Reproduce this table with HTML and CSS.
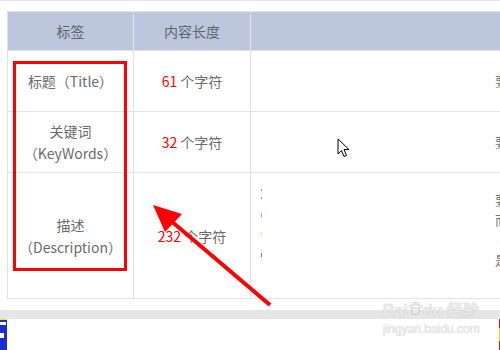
FILE: index.html
```html
<!DOCTYPE html>
<html lang="zh-CN">
<head>
<meta charset="utf-8">
<link rel="stylesheet" href="styles.css">
</head>
<body>
<div class="page">
  <div class="topline"></div>
  <div class="wrap">
    <div class="grid">
      <div class="cell head">标签</div>
      <div class="cell head">内容长度</div>
      <div class="cell head"></div>

      <div class="cell">标题（Title）</div>
      <div class="cell"><span class="num">61</span>&nbsp;个字符</div>
      <div class="cell desc"><span class="frag">要</span></div>

      <div class="cell">关键词<br>（KeyWords）</div>
      <div class="cell"><span class="num">32</span>&nbsp;个字符</div>
      <div class="cell desc"><span class="frag">要</span></div>

      <div class="cell">描述<br>（Description）</div>
      <div class="cell"><span class="num">232</span>&nbsp;个字符</div>
      <div class="cell desc long">
        <div class="dots">
          <span class="d d1"></span><span class="d d2"></span><span class="d d3"></span><span class="d d4"></span><span class="d d5"></span>
        </div>
        <div class="lines">
          <span class="frag">要</span>
          <span class="frag">而</span>
          <span class="frag">·</span>
          <span class="frag">是</span>
        </div>
      </div>
    </div>
  </div>
  <div class="band"></div>
  <div class="bottom">
    <div class="blueicon"><span class="n1"></span><span class="n2"></span></div>
    <div class="rightmark"></div>
  </div>

  <div class="redbox"></div>
  <svg class="arrow" width="500" height="350" viewBox="0 0 500 350">
    <line x1="270" y1="305" x2="170" y2="220" stroke="#ff0000" stroke-width="4"/>
    <polygon points="153,205 182,214 165,232" fill="#ff0000"/>
  </svg>
  <svg class="cursor" width="14" height="21" viewBox="0 0 14 21">
    <path d="M1 1 L1 16 L4.5 12.5 L7 18.5 L9.5 17.5 L7 11.5 L12 11.5 Z" fill="#fff" stroke="#000" stroke-width="1" stroke-linejoin="miter"/>
  </svg>
  <div class="watermark">
    <div class="wm1">Bai<svg class="paw" width="13" height="15" viewBox="0 0 14 16"><ellipse cx="7" cy="11" rx="4.5" ry="3.5" fill="none" stroke="#c8c8c8" stroke-width="1.2"/><circle cx="2.5" cy="6" r="1.6" fill="none" stroke="#c8c8c8"/><circle cx="5.5" cy="3" r="1.6" fill="none" stroke="#c8c8c8"/><circle cx="9" cy="3" r="1.6" fill="none" stroke="#c8c8c8"/><circle cx="12" cy="6" r="1.6" fill="none" stroke="#c8c8c8"/></svg>du 经验</div>
    <div class="wm2">jingyan.baidu.com</div>
  </div>
</div>
</body>
</html>
```
FILE: styles.css
```css
html, body {
  margin: 0;
  padding: 0;
  background: #fff;
}
.page {
  position: relative;
  width: 500px;
  height: 350px;
  overflow: hidden;
  font-family: "Noto Sans CJK SC", "Open Sans", sans-serif;
  font-size: 14px;
  color: #6b6b6b;
}
.topline {
  height: 1px;
  background: #e4e4e4;
}
.wrap {
  padding: 10px 0 0 7px;
  width: 700px;
}
.grid {
  display: grid;
  grid-template-columns: 125px 116px 1fr;
  grid-template-rows: 38px 60px 60px 125px;
  gap: 1px;
  padding: 1px;
  background: #e2e2e2;
}
.cell {
  background: #fff;
  display: flex;
  align-items: center;
  justify-content: center;
  text-align: center;
  line-height: 22px;
}
.head {
  background: #bcc7dd;
  color: #5f6570;
}
.num {
  color: #ff0000;
}
.desc {
  justify-content: flex-start;
  padding-left: 244px;
}
.frag {
  color: #777;
  font-size: 13px;
}
.desc.long {
  padding-left: 0;
  position: relative;
}
.dots {
  position: absolute;
  left: 10px;
  top: 14px;
  width: 3px;
  height: 70px;
}
.d {
  position: absolute;
  left: 0;
  width: 1px;
  height: 2px;
}
.d1 { top: 2px; background: #b08a60; }
.d2 { top: 10px; background: #b38c5e; }
.d3 { top: 26px; background: #e0a060; height: 4px; }
.d4 { top: 46px; background: #f5d080; }
.d5 { top: 66px; background: #8a7a60; height: 4px; }
.lines {
  display: flex;
  flex-direction: column;
  padding-left: 244px;
  padding-bottom: 12px;
  line-height: 20px;
}
.band {
  margin-top: 11px;
  height: 9px;
  background: #e6e6e6;
}
.bottom {
  display: flex;
  justify-content: space-between;
  height: 31px;
}
.blueicon {
  position: relative;
  width: 7px;
  height: 31px;
  background: #1a2ed2;
  border-top: 1px solid #f2e400;
  box-sizing: border-box;
}
.n1, .n2 {
  position: absolute;
  left: 0;
  width: 5px;
  height: 4px;
  background: #fff;
}
.n1 { top: 2px; width: 6px; height: 3px; }
.n2 { top: 13px; width: 4px; height: 5px; }
.rightmark {
  width: 1px;
  height: 31px;
  background: linear-gradient(#d81a1a 0 30%, #f2d21a 30% 70%, #d81a1a 70%);
}
.redbox {
  position: absolute;
  left: 13px;
  top: 61px;
  width: 108px;
  height: 204px;
  border: 3px solid #ff0000;
}
.arrow {
  position: absolute;
  left: 0;
  top: 0;
}
.cursor {
  position: absolute;
  left: 337px;
  top: 138px;
}
.watermark {
  position: absolute;
  left: 383px;
  top: 300px;
  width: 100px;
  color: rgba(242, 242, 242, 0.85);
  text-shadow: 0 0 1px rgba(170, 170, 170, 0.8);
  font-family: "Liberation Sans", sans-serif;
}
.wm1 {
  font-size: 16px;
  font-weight: bold;
  line-height: 22px;
  white-space: nowrap;
}
.paw {
  vertical-align: 0;
  margin: 0 1px;
}
.wm2 {
  font-size: 12px;
  line-height: 14px;
  white-space: nowrap;
}
```
